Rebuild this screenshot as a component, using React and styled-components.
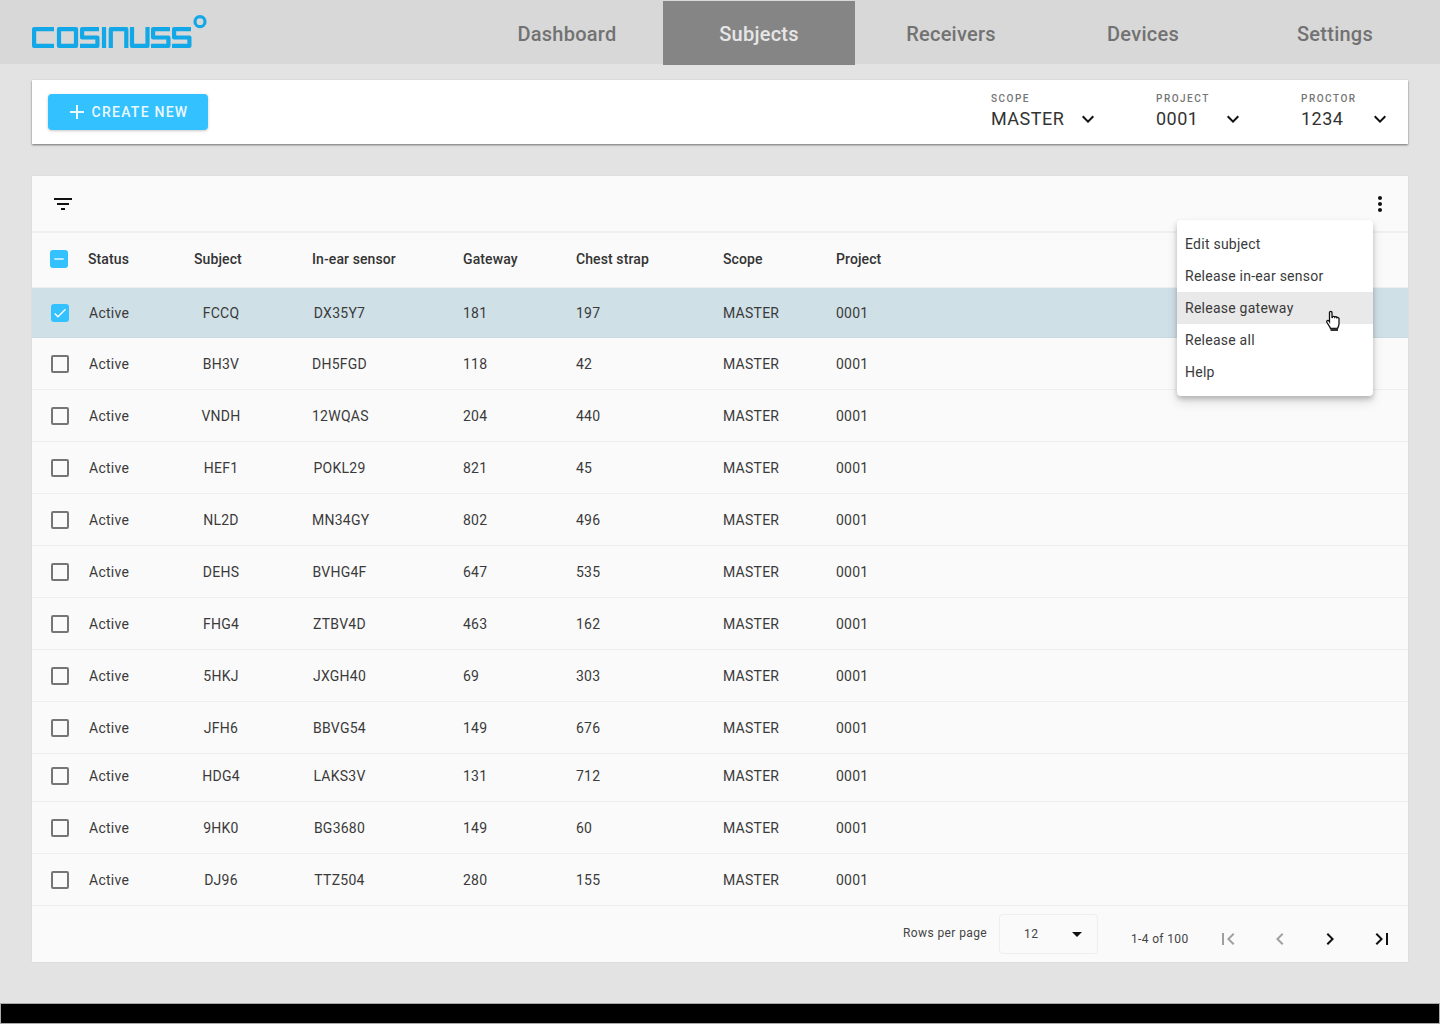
import React from 'react';
import styled, { createGlobalStyle } from 'styled-components';
import { MdAdd, MdKeyboardArrowDown, MdFilterList, MdMoreVert, MdFirstPage, MdLastPage, MdChevronLeft, MdChevronRight, MdArrowDropDown, MdCheck, MdRemove } from 'react-icons/md';

const Global = createGlobalStyle`
  html, body { margin: 0; padding: 0; background: #e3e3e3; }
  body { font-family: Roboto, "Liberation Sans", sans-serif; color: #333; }
  * { box-sizing: border-box; }
`;

const Page = styled.div`
  width: 1440px; height: 1024px; position: relative; overflow: hidden;
  display: flex; flex-direction: column; background: #e3e3e3;
`;
const Header = styled.header`
  height: 64px; background: #d8d8d8; display: flex; padding-left: 32px; flex: none;
`;
const LogoBox = styled.div`
  width: 439px; padding-top: 15px;
  svg { display: block; }
`;
const Nav = styled.nav`display: flex; padding-top: 1px;`;
const NavItem = styled.a`
  width: 192px; height: 64px; display: flex; align-items: center; justify-content: center;
  font-size: 20px; font-weight: 500; letter-spacing: .25px; padding-top: 2px;
  color: ${p => p.$active ? '#e6e6e6' : '#727272'};
  background: ${p => p.$active ? '#858585' : 'transparent'};
`;
const Main = styled.main`padding: 16px 32px 0; flex: 1;`;
const Toolbar = styled.section`
  height: 64px; background: #fff; display: flex; align-items: center; justify-content: space-between;
  padding: 0 16px; box-shadow: 0 1px 2px rgba(0,0,0,.5);
`;
const CreateButton = styled.button`
  width: 160px; height: 36px; border: 0; border-radius: 4px; background: #33c1ff; color: #eaf8ff;
  display: flex; align-items: center; justify-content: center; gap: 3px; padding: 0 3px 0 0;
  font: 500 14px Roboto, sans-serif; letter-spacing: 1.25px;
  box-shadow: 0 1px 3px rgba(0,0,0,.22);
`;
const Selects = styled.div`display: flex; gap: 56px;`;
const Select = styled.div`width: ${p => p.$w}px; display: flex; flex-direction: column; margin-top: -1px;`;
const SelectLabel = styled.span`font-size: 10px; line-height: 12px; letter-spacing: 1.5px; color: #757575; font-weight: 500;`;
const SelectValue = styled.div`
  display: flex; justify-content: space-between; align-items: center; height: 24px; margin-top: 2px;
  font-size: 18px; letter-spacing: .5px; color: #333;
  svg { color: #111; }
`;
const Card = styled.section`
  margin-top: 32px; background: #fafafa; position: relative; box-shadow: 0 0 1px rgba(0,0,0,.12);
`;
const CardBar = styled.div`
  height: 57px; display: flex; align-items: center; justify-content: space-between; padding: 0 16px 0 19px;
  border-bottom: 2px solid #f0f0f0; color: #111;
`;
const Grid = styled.div`
  display: grid; grid-template-columns: 56px 106px 118px 151px 113px 147px 113px 1fr; align-items: center;
  height: ${p => p.$h}px; padding-bottom: ${p => p.$pb || 0}px;
  background: ${p => p.$selected ? '#d0e0e7' : 'transparent'};
  border-bottom: 1.5px solid ${p => p.$selected ? '#c8d9e0' : '#eeeeee'};
  font-size: 14px; letter-spacing: .25px; color: #3a3a3a;
`;
const HeadCell = styled.div`font-weight: 500; color: #333; letter-spacing: .1px;`;
const Cell = styled.div`
  width: ${p => p.$w ? p.$w + 'px' : 'auto'};
  padding-left: ${p => p.$pl || 0}px;
  text-align: ${p => p.$center ? 'center' : 'left'};
  white-space: nowrap;
`;
const Box = styled.span`
  width: 18px; height: 18px; margin-left: ${p => p.$ml}px; border-radius: ${p => p.$filled ? 3 : 2}px;
  display: flex; align-items: center; justify-content: center; color: #fff;
  background: ${p => p.$filled ? '#33c1ff' : 'transparent'};
  border: ${p => p.$filled ? '0' : '2px solid #757575'};
`;
const Footer = styled.div`
  height: 56px; display: flex; align-items: flex-start; position: relative; padding-left: 871px;
`;
const RowsLabel = styled.span`font-size: 12px; letter-spacing: .4px; color: #444; margin-top: 20px; width: 96px; white-space: nowrap;`;
const PageSelect = styled.div`
  width: 99px; height: 40px; margin-top: 8px; border: 1px solid #eee; border-radius: 4px;
  display: flex; align-items: center; justify-content: space-between; padding: 0 8px 0 24px;
  font-size: 12px; letter-spacing: .4px; color: #444;
  svg { color: #111; }
`;
const Range = styled.span`font-size: 12px; letter-spacing: .35px; color: #444; margin: 26px 0 0 33px; width: 58px; white-space: nowrap;`;
const Pager = styled.div`display: flex; margin: 21px 0 0 27px;`;
const PagerBtn = styled.span`
  display: flex; width: 24px; height: 24px; margin-left: ${p => p.$ml || 0}px;
  color: ${p => p.$off ? '#a0a0a0' : '#111'};
`;
const Menu = styled.ul`
  position: absolute; left: 1145px; top: 44px; width: 196px; height: 176px; margin: 0; padding: 8px 0; list-style: none;
  background: #fff; border-radius: 4px;
  box-shadow: 0 3px 5px rgba(0,0,0,.2), 0 6px 12px rgba(0,0,0,.12);
`;
const MenuItem = styled.li`
  height: 32px; display: flex; align-items: center; padding-left: 8px; font-size: 14px; letter-spacing: .25px; color: #3a3a3a;
  background: ${p => p.$hover ? '#e9e9e9' : 'transparent'};
`;
const Pointer = styled.svg`position: absolute; left: 1293px; top: 134px;`;
const BottomBar = styled.footer`
  height: 21px; background: #000; border: 1px solid #aaa; flex: none;
`;

const rows = [
  ['FCCQ','DX35Y7','181','197'],['BH3V','DH5FGD','118','42'],['VNDH','12WQAS','204','440'],['HEF1','POKL29','821','45'],
  ['NL2D','MN34GY','802','496'],['DEHS','BVHG4F','647','535'],['FHG4','ZTBV4D','463','162'],['5HKJ','JXGH40','69','303'],
  ['JFH6','BBVG54','149','676'],['HDG4','LAKS3V','131','712'],['9HK0','BG3680','149','60'],['DJ96','TTZ504','280','155'],
];
const heights = [50,52,52,52,52,52,52,52,52,48,52,52];

const Logo = () => (
  <svg width="178" height="34" viewBox="0 0 178 34" fill="none" stroke="#12a8e8" strokeWidth="4.2" strokeLinejoin="round" role="img" aria-label="cosinuss">
    <path d="M22 14.100H2.100v16.800H22" />
    <path d="M27 14.100h17v16.800H27z" />
    <path d="M67 14.100H50.100v8.400h15.300v8.400H48" />
    <path d="M72 12v21" />
    <path d="M78.800 33V14.100h15.500V33" />
    <path d="M100 12v18.900h15.500V12" />
    <path d="M138 14.100H121.100v8.400h15.300v8.400H119" />
    <path d="M159 14.100H142.100v8.400h15.300v8.400H140" />
    <circle cx="168" cy="6.700" r="5" strokeWidth="3.200" />
  </svg>
);

export default function App() {
  return (
    <Page>
      <Global />
      <Header>
        <LogoBox><Logo /></LogoBox>
        <Nav>
          <NavItem>Dashboard</NavItem>
          <NavItem $active>Subjects</NavItem>
          <NavItem>Receivers</NavItem>
          <NavItem>Devices</NavItem>
          <NavItem>Settings</NavItem>
        </Nav>
      </Header>
      <Main>
        <Toolbar>
          <CreateButton><MdAdd size={24} />CREATE NEW</CreateButton>
          <Selects>
            <Select $w={109}><SelectLabel>SCOPE</SelectLabel><SelectValue>MASTER<MdKeyboardArrowDown size={24} /></SelectValue></Select>
            <Select $w={89}><SelectLabel>PROJECT</SelectLabel><SelectValue>0001<MdKeyboardArrowDown size={24} /></SelectValue></Select>
            <Select $w={91}><SelectLabel>PROCTOR</SelectLabel><SelectValue>1234<MdKeyboardArrowDown size={24} /></SelectValue></Select>
          </Selects>
        </Toolbar>
        <Card>
          <CardBar><MdFilterList size={24} /><MdMoreVert size={24} /></CardBar>
          <Grid $h={55} $pb={2}>
            <Box $filled $ml={18}><MdRemove size={16} /></Box>
            <HeadCell>Status</HeadCell><HeadCell>Subject</HeadCell><HeadCell>In-ear sensor</HeadCell>
            <HeadCell>Gateway</HeadCell><HeadCell>Chest strap</HeadCell><HeadCell>Scope</HeadCell><HeadCell>Project</HeadCell>
          </Grid>
          {rows.map((r, i) => (
            <Grid key={r[0]} $h={heights[i]} $selected={i === 0} $pb={i === 9 ? 4 : 0}>
              {i === 0 ? <Box $filled $ml={19}><MdCheck size={16} /></Box> : <Box $ml={19} />}
              <Cell $pl={1}>Active</Cell>
              <Cell $center $w={54}>{r[0]}</Cell>
              <Cell $center $w={55}>{r[1]}</Cell>
              <Cell>{r[2]}</Cell><Cell>{r[3]}</Cell>
              <Cell>MASTER</Cell><Cell>0001</Cell>
            </Grid>
          ))}
          <Footer>
            <RowsLabel>Rows per page</RowsLabel>
            <PageSelect>12<MdArrowDropDown size={24} /></PageSelect>
            <Range>1-4 of 100</Range>
            <Pager>
              <PagerBtn $off><MdFirstPage size={24} /></PagerBtn>
              <PagerBtn $off $ml={28}><MdChevronLeft size={24} /></PagerBtn>
              <PagerBtn $ml={26}><MdChevronRight size={24} /></PagerBtn>
              <PagerBtn $ml={28}><MdLastPage size={24} /></PagerBtn>
            </Pager>
          </Footer>
          <Menu>
            <MenuItem>Edit subject</MenuItem>
            <MenuItem>Release in-ear sensor</MenuItem>
            <MenuItem $hover>Release gateway</MenuItem>
            <MenuItem>Release all</MenuItem>
            <MenuItem>Help</MenuItem>
          </Menu>
          <Pointer width="17" height="22" viewBox="0 0 17 22">
            <path d="M4.500 2.500c0-1.500 2.500-1.500 2.500 0V8l.5-1c.5-1 2-.8 2.300.2.500-.8 2-.6 2.200.5.600-.5 2-.2 2 1v5.300c0 2-1 3-1.500 4.500H5.500C5 16.500 3.500 15 2 12.500 1 11 2.500 9.600 4 11l.5.800z" fill="#fff" stroke="#111" strokeWidth="1.300" />
            <path d="M5.500 18.500h7.500v2.500H5.500z" fill="#333" />
          </Pointer>
        </Card>
      </Main>
      <BottomBar />
    </Page>
  );
}
